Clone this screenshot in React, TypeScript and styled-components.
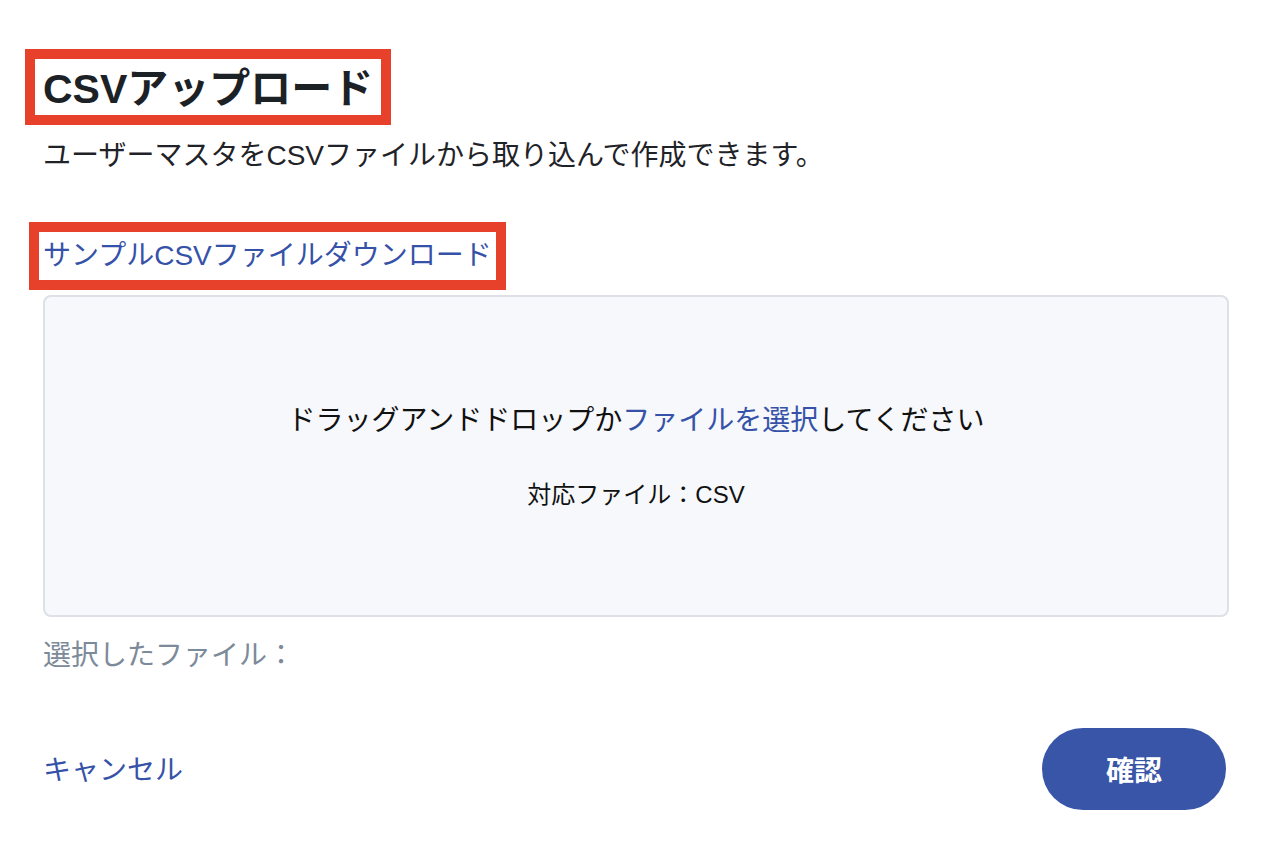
import styled, { createGlobalStyle } from "styled-components";

const GlobalStyle = createGlobalStyle`
  body {
    margin: 0;
    background: #ffffff;
    font-family: "Liberation Sans", "Noto Sans CJK JP", sans-serif;
    color: #1f2328;
  }
`;

const Page = styled.div`
  padding: 49px 43px 0 43px;
  display: flex;
  flex-direction: column;
  align-items: flex-start;
`;

const Marked = styled.div<{ $pad: number }>`
  border: 10px solid #e8412b;
  padding: 0 ${(p) => p.$pad}px;
  margin-left: ${(p) => -(p.$pad + 10)}px;
  background: #fff;
`;

const Title = styled.h1`
  margin: 0;
  font-size: 41px;
  line-height: 56px;
  font-weight: 700;
  color: #1c2126;
  padding-top: 2px;
  height: 56px;
  box-sizing: border-box;
`;

const Description = styled.p`
  margin: 11px 0 0;
  font-size: 28px;
  line-height: 40px;
  color: #1f2328;
`;

const SampleLink = styled.a`
  display: block;
  font-size: 28px;
  line-height: 48px;
  color: #3652a8;
  text-decoration: none;
`;

const LinkWrap = styled.div`
  margin-top: 46px;
`;

const DropZone = styled.div`
  margin-top: 5px;
  align-self: stretch;
  height: 322px;
  box-sizing: border-box;
  border: 2px solid #dde0e6;
  border-radius: 8px;
  background: #f6f8fb;
  display: flex;
  flex-direction: column;
  align-items: center;
  justify-content: center;
  gap: 37px;
`;

const DropText = styled.div`
  font-size: 28px;
  line-height: 40px;
  color: #111;
`;

const Accent = styled.span`
  color: #3652a8;
`;

const Accepted = styled.div`
  font-size: 24px;
  line-height: 34px;
  color: #111;
`;

const Selected = styled.div`
  margin-top: 19px;
  font-size: 28px;
  line-height: 40px;
  color: #7d8a99;
`;

const Footer = styled.div`
  margin-top: 52px;
  align-self: stretch;
  display: flex;
  align-items: center;
  justify-content: space-between;
  padding-right: 3px;
`;

const Cancel = styled.a`
  font-size: 28px;
  line-height: 40px;
  color: #3652a8;
  padding-top: 3px;
`;

const Confirm = styled.button`
  width: 184px;
  height: 82px;
  border: none;
  border-radius: 41px;
  background: #3855a7;
  color: #fff;
  font-family: inherit;
  font-size: 28px;
  font-weight: 700;
`;

export default function App() {
  return (
    <>
      <GlobalStyle />
      <Page>
        <Marked $pad={8}>
          <Title>CSVアップロード</Title>
        </Marked>
        <Description>ユーザーマスタをCSVファイルから取り込んで作成できます。</Description>
        <LinkWrap>
          <Marked $pad={4}>
            <SampleLink>サンプルCSVファイルダウンロード</SampleLink>
          </Marked>
        </LinkWrap>
        <DropZone>
          <DropText>
            ドラッグアンドドロップか<Accent>ファイルを選択</Accent>してください
          </DropText>
          <Accepted>対応ファイル：CSV</Accepted>
        </DropZone>
        <Selected>選択したファイル：</Selected>
        <Footer>
          <Cancel>キャンセル</Cancel>
          <Confirm>確認</Confirm>
        </Footer>
      </Page>
    </>
  );
}
